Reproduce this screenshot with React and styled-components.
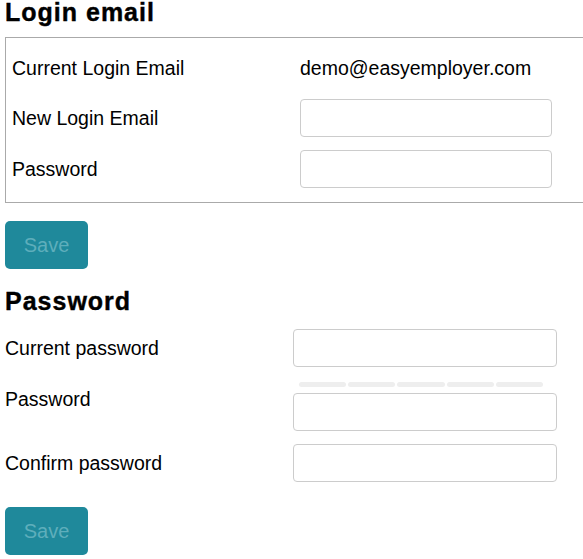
import styled, { createGlobalStyle } from 'styled-components'

const GlobalStyle = createGlobalStyle`
  html, body {
    margin: 0;
    padding: 0;
    background: #fff;
    overflow: hidden;
  }
  body {
    font-family: "Liberation Sans", Arial, sans-serif;
    color: #000;
  }
`

const Page = styled.div`
  padding: 0 5px;
  width: 640px;
`

const Heading = styled.h2`
  margin: 0;
  font-size: 25px;
  line-height: 25px;
  font-weight: bold;
  letter-spacing: 1px;
  -webkit-text-stroke: 0.4px #000;
`

const Fieldset = styled.div`
  margin-top: 12px;
  border: 1px solid #aaa;
  padding: 12px 6px 14px;
  display: flex;
  flex-direction: column;
  gap: 13px;
`

const Rows = styled.div`
  margin-top: 15px;
  display: flex;
  flex-direction: column;
  gap: 13px;
`

const Row = styled.div`
  display: flex;
  align-items: ${p => (p.$top ? 'flex-start' : 'center')};
  height: ${p => p.$height || 38}px;
  min-height: ${p => p.$height || 38}px;
  height: auto;
`

const Label = styled.div`
  width: 288px;
  flex: none;
  font-size: 19.5px;
  line-height: ${p => p.$line || 38}px;
`

const Value = styled.div`
  font-size: 19.5px;
`

const Input = styled.input`
  box-sizing: border-box;
  width: ${p => p.$width}px;
  height: 38px;
  margin: 0;
  border: 1px solid #ccc;
  border-radius: 4px;
  background: #fff;
  font: inherit;
  outline: none;
`

const Field = styled.div`
  display: flex;
  flex-direction: column;
`

const Strength = styled.div`
  display: flex;
  gap: 2px;
  width: 244px;
  margin: 2px 0 6px 6px;
`

const Segment = styled.div`
  flex: 1;
  height: 5px;
  border-radius: 3px;
  background: #eee;
`

const SaveButton = styled.button`
  display: block;
  margin: ${p => p.$margin};
  width: 83px;
  height: 48px;
  border: none;
  border-radius: 5px;
  background: #1f899b;
  color: #5eaebb;
  font-family: "Liberation Sans", Arial, sans-serif;
  font-size: 20px;
  padding: 0;
`

const App = () => (
  <Page>
    <GlobalStyle />
    <Heading>Login email</Heading>
    <Fieldset>
      <Row $height={36}>
        <Label $line={36}>Current Login Email</Label>
        <Value>demo@easyemployer.com</Value>
      </Row>
      <Row>
        <Label>New Login Email</Label>
        <Input $width={252} type="email" />
      </Row>
      <Row>
        <Label>Password</Label>
        <Input $width={252} type="password" />
      </Row>
    </Fieldset>
    <SaveButton $margin="18px 0 20px" disabled>Save</SaveButton>

    <Heading>Password</Heading>
    <Rows>
      <Row>
        <Label>Current password</Label>
        <Input $width={264} type="password" />
      </Row>
      <Row $top>
        <Label>Password</Label>
        <Field>
          <Strength>
            {[0, 1, 2, 3, 4].map(i => <Segment key={i} />)}
          </Strength>
          <Input $width={264} type="password" />
        </Field>
      </Row>
      <Row>
        <Label>Confirm password</Label>
        <Input $width={264} type="password" />
      </Row>
    </Rows>
    <SaveButton $margin="25px 0 0" disabled>Save</SaveButton>
  </Page>
)

export default App
